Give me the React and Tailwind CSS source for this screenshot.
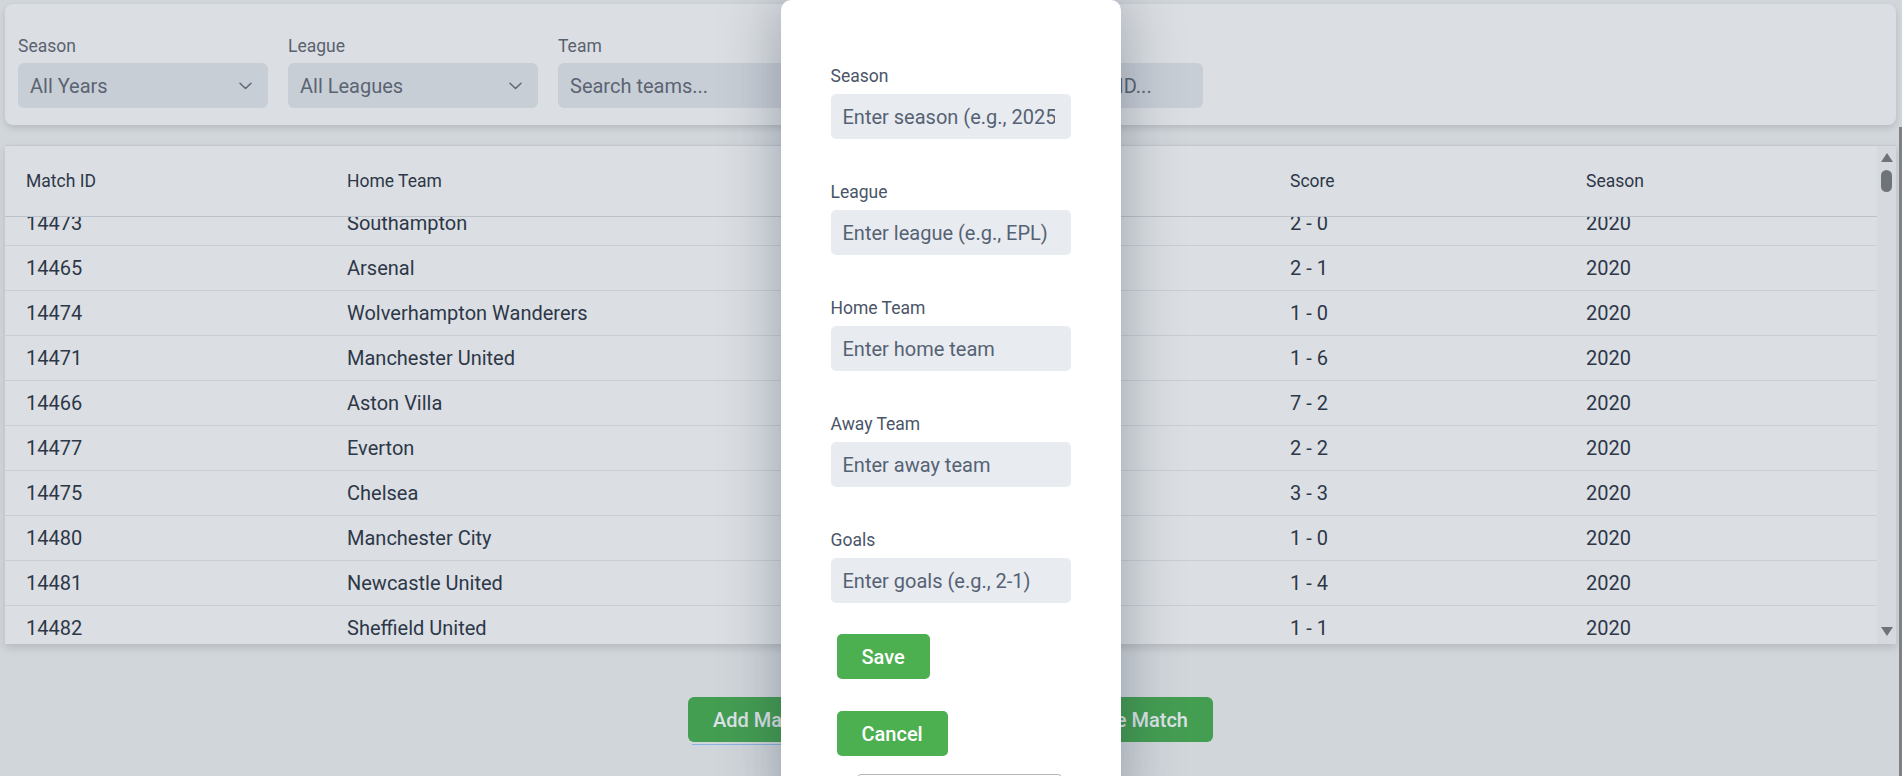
import React from "react";

const rows = [
  ["14473", "Southampton", "Leeds United", "2 - 0", "2020"],
  ["14465", "Arsenal", "Fulham", "2 - 1", "2020"],
  ["14474", "Wolverhampton Wanderers", "Sheffield United", "1 - 0", "2020"],
  ["14471", "Manchester United", "Tottenham", "1 - 6", "2020"],
  ["14466", "Aston Villa", "Liverpool", "7 - 2", "2020"],
  ["14477", "Everton", "Brighton", "2 - 2", "2020"],
  ["14475", "Chelsea", "Crystal Palace", "3 - 3", "2020"],
  ["14480", "Manchester City", "Arsenal", "1 - 0", "2020"],
  ["14481", "Newcastle United", "Burnley", "1 - 4", "2020"],
  ["14482", "Sheffield United", "Fulham", "1 - 1", "2020"],
];

function Chevron() {
  return (
    <svg width="13" height="8" viewBox="0 0 13 8" fill="none">
      <path d="M1 1.2L6.5 6.5L12 1.2" stroke="#5b6472" strokeWidth="1.4" strokeLinecap="round" strokeLinejoin="round" />
    </svg>
  );
}

function FilterSelect({ label, value, width }) {
  return (
    <div className="flex flex-col gap-[6px]" style={{ width }}>
      <div className="h-[22px] leading-[22px] text-[17.5px] text-[#5a6270]">{label}</div>
      <div className="h-[45px] rounded-[6px] bg-[#c8ced6] flex items-center justify-between pl-[12px] pr-[16px]">
        <span className="text-[20px] text-[#5b6472]">{value}</span>
        <Chevron />
      </div>
    </div>
  );
}

function FilterInput({ label, placeholder, width }) {
  return (
    <div className="flex flex-col gap-[6px]" style={{ width }}>
      <div className="h-[22px] leading-[22px] text-[17.5px] text-[#5a6270]">{label}</div>
      <div className="h-[45px] rounded-[6px] bg-[#c8ced6] flex items-center pl-[12px]">
        <span className="text-[20px] text-[#5b6472] whitespace-nowrap">{placeholder}</span>
      </div>
    </div>
  );
}

function ModalField({ label, placeholder }) {
  return (
    <div className="flex flex-col mb-[42px]">
      <label className="h-[22px] leading-[22px] text-[17.5px] text-[#4a5568] mb-[7px]">{label}</label>
      <input
        className="h-[45px] w-[240px] rounded-[5px] bg-[#e8ebf0] pl-[12px] pr-[16px] text-[20px] text-[#2d3748] placeholder:text-[#566274] outline-none"
        placeholder={placeholder}
      />
    </div>
  );
}

export default function App() {
  return (
    <div className="relative h-[776px] w-full overflow-hidden bg-[#d1d6db] font-['Roboto',sans-serif] flex">
      {/* main page (dimmed) */}
      <div className="flex-1 min-w-0 pl-[5px] pr-[3px] pt-[4px] flex flex-col">
        {/* filter card */}
        <div className="h-[121px] rounded-[8px] bg-[#dbdfe3] shadow-[0_3px_6px_rgba(0,0,0,0.12)] pt-[31px] pl-[13px] flex gap-[20px]">
          <FilterSelect label="Season" value="All Years" width={250} />
          <FilterSelect label="League" value="All Leagues" width={250} />
          <FilterInput label="Team" placeholder="Search teams..." width={375} />
          <FilterInput label="Match ID" placeholder="Search by Match ID..." width={250} />
        </div>

        {/* table card */}
        <div className="mt-[20px] h-[499px] border-t border-[#c3c8cf] bg-[#dbdfe3] shadow-[0_4px_8px_rgba(0,0,0,0.12)] flex">
          <div className="flex-1 min-w-0 flex flex-col">
            <div className="h-[71px] shrink-0 border-b border-[#bcc2c9] grid grid-cols-[321px_472px_471px_296px_1fr] items-center pl-[21px] text-[17.5px] text-[#2d3748]">
              <div>Match ID</div>
              <div>Home Team</div>
              <div>Away Team</div>
              <div>Score</div>
              <div>Season</div>
            </div>
            <div className="flex-1 overflow-hidden">
              <div className="mt-[-16px]">
                {rows.map((r) => (
                  <div
                    key={r[0]}
                    className="h-[45px] border-b border-[#c9ced4] grid grid-cols-[321px_472px_471px_296px_1fr] items-center pl-[21px] text-[20px] text-[#2d3748]"
                  >
                    <div>{r[0]}</div>
                    <div>{r[1]}</div>
                    <div>{r[2]}</div>
                    <div>{r[3]}</div>
                    <div>{r[4]}</div>
                  </div>
                ))}
              </div>
            </div>
          </div>
          {/* scrollbar */}
          <div className="w-[19px] shrink-0 bg-[#d6dadf] flex flex-col items-center pt-[7px] pb-[8px]">
            <svg width="12" height="9" viewBox="0 0 12 9">
              <path d="M6 0L12 9H0Z" fill="#6f747a" />
            </svg>
            <div className="mt-[8px] h-[22px] w-[11px] rounded-full bg-[#6f747a]" />
            <div className="flex-1" />
            <svg width="12" height="9" viewBox="0 0 12 9">
              <path d="M0 0H12L6 9Z" fill="#6f747a" />
            </svg>
          </div>
        </div>

        {/* action buttons */}
        <div className="mt-[53px] flex justify-center items-start gap-[17px]">
          <div className="flex flex-col">
            <button className="h-[45px] px-[25px] rounded-[6px] bg-[#449e52] text-[20px] font-medium text-[#dde3e8]">Add Match</button>
            <div className="mx-[4px] mt-[2px] h-[1px] bg-[#8ab2e3]" />
          </div>
          <button className="h-[45px] px-[25px] rounded-[6px] bg-[#449e52] text-[20px] font-medium text-[#dde3e8]">Update Match</button>
          <button className="h-[45px] px-[25px] rounded-[6px] bg-[#449e52] text-[20px] font-medium text-[#dde3e8]">Delete Match</button>
        </div>
      </div>

      {/* page scrollbar edge */}
      <div className="w-[3px] shrink-0 flex flex-col">
        <div className="h-[127px]" />
        <div className="flex-1 bg-[#7d8186]" />
      </div>

      {/* modal */}
      <div className="absolute inset-x-0 top-0 flex justify-center pr-[1px]">
        <div className="w-[340px] h-[820px] bg-white rounded-t-[10px] shadow-[0_0_60px_rgba(30,40,60,0.35)] pt-[65px] px-[50px]">
          <ModalField label="Season" placeholder="Enter season (e.g., 2025)" />
          <ModalField label="League" placeholder="Enter league (e.g., EPL)" />
          <ModalField label="Home Team" placeholder="Enter home team" />
          <ModalField label="Away Team" placeholder="Enter away team" />
          <div className="mb-[-11px]">
            <ModalField label="Goals" placeholder="Enter goals (e.g., 2-1)" />
          </div>
          <div className="flex flex-col items-start pl-[6px]">
            <button className="h-[45px] px-[25px] rounded-[5px] bg-[#4caf50] text-[20px] font-medium text-white">Save</button>
            <button className="mt-[32px] h-[45px] px-[25px] rounded-[5px] bg-[#4caf50] text-[20px] font-medium text-white">Cancel</button>
            <div className="mt-[18px] ml-[20px] w-[205px] h-[40px] border border-[#b5b5b5] rounded-[4px]" />
          </div>
        </div>
      </div>
    </div>
  );
}
